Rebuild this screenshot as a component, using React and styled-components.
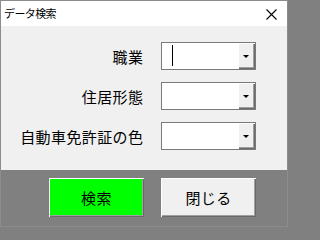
import React from 'react';
import styled, { createGlobalStyle } from 'styled-components';

const GlobalStyle = createGlobalStyle`
    html, body {
        margin:0;
        padding:0;
        background:#808080;
    }
    body{
        font-family:"Noto Sans CJK JP", "Noto Sans", sans-serif;
        color:#000;
    }
`;

const fields = ['職業', '住居形態', '自動車免許証の色'];

const App = () => {
    return (
        <>
            <GlobalStyle />
            <Window>
                <TitleBar>
                    <Title>データ検索</Title>
                    <CloseButton aria-label="close">
                        <svg width="11" height="11" viewBox="0 0 11 11">
                            <path d="M0.5 0.5 L10.5 10.5 M10.5 0.5 L0.5 10.5" stroke="#000" strokeWidth="1.1" fill="none" />
                        </svg>
                    </CloseButton>
                </TitleBar>
                <Body>
                    <Form>
                        {fields.map((label, i) => (
                            <React.Fragment key={label}>
                                <Label>{label}</Label>
                                <Combo>
                                    <ComboText>{i === 0 && <Caret />}</ComboText>
                                    <DropButton>
                                        <Arrow />
                                    </DropButton>
                                </Combo>
                            </React.Fragment>
                        ))}
                    </Form>
                </Body>
                <Footer>
                    <Button $primary>検索</Button>
                    <Button>閉じる</Button>
                </Footer>
            </Window>
        </>
    );
};

const Window = styled.div`
    width:288px;
    height:227px;
    box-sizing:border-box;
    border:1px solid #8c8c8c;
    display:flex;
    flex-direction:column;
    overflow:hidden;
`;

const TitleBar = styled.div`
    height:25px;
    background:#fff;
    display:flex;
    align-items:center;
    justify-content:space-between;
    padding:0 10px 0 3px;
`;

const Title = styled.span`
    font-size:11px;
    letter-spacing:-0.6px;
    line-height:1;
    margin-top:-1px;
`;

const CloseButton = styled.div`
    width:11px;
    height:11px;
    display:flex;
    margin-top:1px;
`;

const Body = styled.div`
    height:144px;
    background:#f0f0f0;
    padding-top:16px;
    box-sizing:border-box;
`;

const Form = styled.div`
    display:grid;
    grid-template-columns:142px 95px;
    grid-auto-rows:28px;
    column-gap:18px;
    row-gap:12px;
    align-items:center;
`;

const Label = styled.div`
    font-size:15px;
    letter-spacing:0.4px;
    text-align:right;
    line-height:1;
    margin-right:-0.4px;
`;

const Combo = styled.div`
    height:28px;
    box-sizing:border-box;
    border:1px solid #7a7a7a;
    background:#fff;
    display:flex;
`;

const ComboText = styled.div`
    flex:1;
    position:relative;
`;

const Caret = styled.span`
    position:absolute;
    left:10px;
    top:2px;
    width:1px;
    height:21px;
    background:#000;
`;

const DropButton = styled.div`
    width:17px;
    background:#f0f0f0;
    box-shadow:inset 1px 1px #fff, inset -1px -1px #696969, inset -2px -2px #a0a0a0;
    display:flex;
    align-items:center;
    justify-content:center;
`;

const Arrow = styled.span`
    width:0;
    height:0;
    border-left:3px solid transparent;
    border-right:3px solid transparent;
    border-top:3px solid #000;
    margin:1px 1px 0 0;
`;

const Footer = styled.div`
    flex:1;
    background:#808080;
    display:flex;
    gap:17px;
    padding:8px 0 0 48px;
`;

const Button = styled.div`
    width:95px;
    height:39px;
    box-sizing:border-box;
    background:${p => (p.$primary ? '#00ff00' : '#f0f0f0')};
    box-shadow:inset 1px 1px #fff, inset -1px -1px #696969, inset -2px -2px #a0a0a0;
    display:flex;
    align-items:center;
    justify-content:center;
    font-size:15px;
    letter-spacing:0.4px;
    padding-bottom:1px;
`;

export default App;
